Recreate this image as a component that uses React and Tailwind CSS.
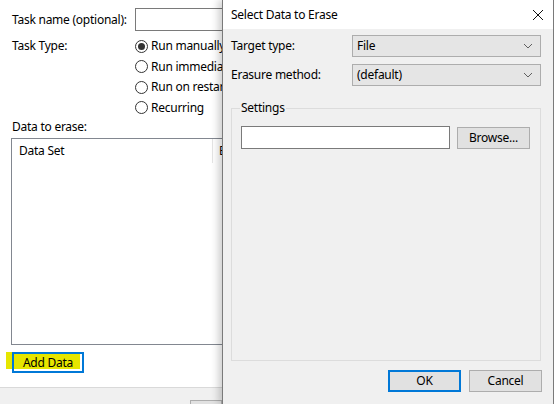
import React from "react";

function Radio({ checked, label }) {
  return (
    <div className="flex items-center h-[20.5px]">
      <span className="shrink-0 w-[13px] h-[13px] rounded-full border border-[#333] bg-white flex items-center justify-center">
        {checked && <span className="w-[7px] h-[7px] rounded-full bg-[#333]" />}
      </span>
      <span className="ml-[3px] whitespace-nowrap">{label}</span>
    </div>
  );
}

function Chevron() {
  return (
    <svg width="10" height="6" viewBox="0 0 10 6" className="shrink-0">
      <path d="M1 1 L5 5 L9 1" fill="none" stroke="#606060" strokeWidth="1" />
    </svg>
  );
}

function Select({ value }) {
  return (
    <div className="w-[189px] h-[22px] border border-[#adadad] bg-[#e5e5e5] flex items-center justify-between pl-[4px] pr-[7px]">
      <span>{value}</span>
      <Chevron />
    </div>
  );
}

export default function App() {
  return (
    <div
      className="relative w-[554px] h-[404px] overflow-hidden bg-white text-[12px] tracking-[-0.25px] text-black leading-none"
      style={{ fontFamily: '"Noto Sans", sans-serif' }}
    >
      {/* main task window */}
      <div className="flex flex-col h-full">
        <div className="flex-1 pl-[12px] pr-0">
          <div className="flex items-center pt-[8px]">
            <span className="shrink-0 w-[123px]">Task name (optional):</span>
            <div className="shrink-0 w-[200px] h-[23px] border border-[#7a7a7a] bg-white" />
          </div>
          <div className="flex mt-[5px]">
            <span className="shrink-0 w-[123px] pt-[4px]">Task Type:</span>
            <div className="flex flex-col">
              <Radio checked label="Run manually" />
              <Radio label="Run immediately" />
              <Radio label="Run on restart" />
              <Radio label="Recurring" />
            </div>
          </div>
          <div className="mt-[3px]">Data to erase:</div>
          <div className="ml-[-1px] mt-[5px] w-[230px] h-[207px] border border-[#828790] bg-white">
            <div className="flex h-[24px] items-center">
              <span className="shrink-0 pl-[7px] w-[200px]">Data Set</span>
              <span className="shrink-0 h-full border-l border-[#e5e5e5] pl-[6px] flex items-center">Erasure</span>
            </div>
          </div>
          <div className="relative mt-[7px] w-[72px] h-[21px]">
            <span className="absolute left-[-6px] top-0 w-[74px] h-[17px] bg-[#e6e600]" />
            <div className="absolute inset-0 border-2 border-[#0078d7] flex items-center justify-center">
              <span className="relative">Add Data</span>
            </div>
          </div>
        </div>
        <div className="h-[17px] border-t border-[#d9d9d9] bg-[#f0f0f0] flex justify-end pr-[332px] pt-[12px]">
          <div className="w-[32px] h-[8px] border border-[#adadad] border-b-0 bg-[#e1e1e1]" />
        </div>
      </div>

      {/* Select Data to Erase dialog */}
      <div className="absolute left-[222px] top-0 w-[332px] h-[404px] border-x border-[#7a7a7a] bg-[#f0f0f0] flex flex-col shadow-[-4px_0_7px_rgba(0,0,0,0.18)]">
        <div className="h-[29px] bg-white flex items-center justify-between pl-[8px] pr-[9px]">
          <span>Select Data to Erase</span>
          <svg width="12" height="12" viewBox="0 0 12 12">
            <path d="M1 1 L11 11 M11 1 L1 11" stroke="#111" strokeWidth="1" fill="none" />
          </svg>
        </div>
        <div className="flex flex-col pl-[8px] pr-[12px] pt-[6px]">
          <div className="flex items-center">
            <span className="shrink-0 w-[121px]">Target type:</span>
            <Select value="File" />
          </div>
          <div className="flex items-center mt-[7px]">
            <span className="shrink-0 w-[121px]">Erasure method:</span>
            <Select value="(default)" />
          </div>
          <div className="relative mt-[22px] w-[310px] h-[253px] border border-[#dcdcdc]">
            <span className="absolute left-[8px] top-[-7px] bg-[#f0f0f0] px-[1px]">Settings</span>
            <div className="flex items-center mt-[17px] ml-[9px]">
              <div className="w-[209px] h-[23px] border border-[#7a7a7a] bg-white" />
              <div className="ml-[7px] w-[73px] h-[22px] border border-[#adadad] bg-[#e1e1e1] flex items-center justify-center">
                Browse...
              </div>
            </div>
          </div>
          <div className="flex justify-end gap-[8px] mt-[9px] mr-[-1px]">
            <div className="w-[73px] h-[22px] border-2 border-[#0078d7] bg-[#e1e1e1] flex items-center justify-center">
              OK
            </div>
            <div className="w-[73px] h-[22px] border border-[#adadad] bg-[#e1e1e1] flex items-center justify-center">
              Cancel
            </div>
          </div>
        </div>
      </div>
    </div>
  );
}
